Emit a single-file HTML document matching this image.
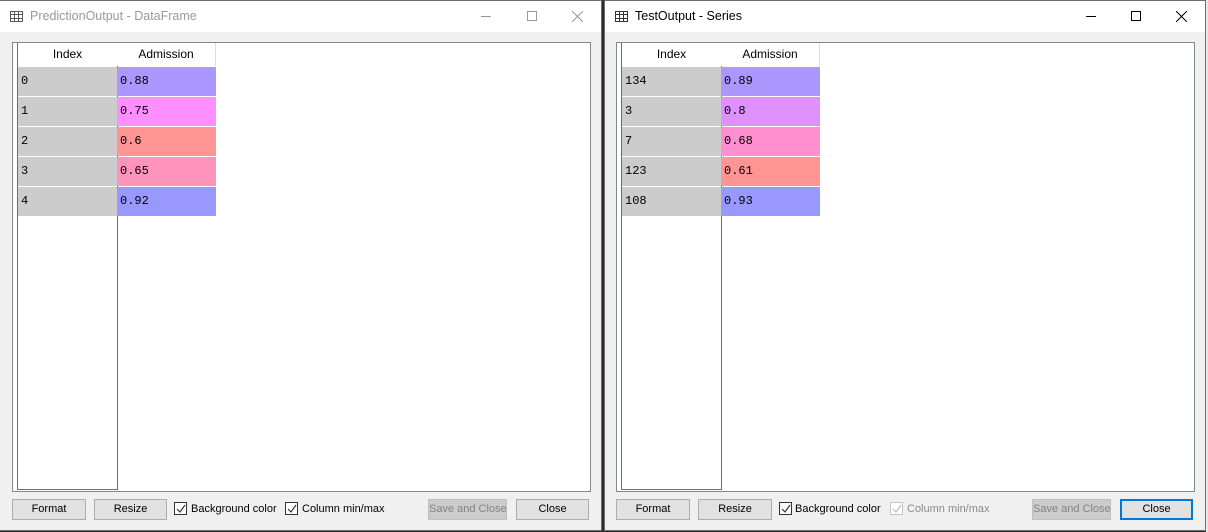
<!DOCTYPE html>
<html><head><meta charset="utf-8"><style>
*{box-sizing:border-box;margin:0;padding:0}
body{width:1208px;height:532px;position:relative;overflow:hidden;background:#2b2b2b;font-family:"Liberation Sans",sans-serif;font-size:12px;color:#000}
.win{position:absolute;top:0;height:531px;background:#f0f0f0;border:1px solid #6d6d6d}
.tb{position:absolute;left:0;top:0;right:0;height:31px;background:#fff}
.title{position:absolute;left:30px;top:8px;font-size:12.5px}
.ico{position:absolute;left:10px;top:10px;width:13px;height:11px;border:1.5px solid #333}
.ico:before{content:"";position:absolute;left:0;right:0;top:2px;height:3px;border-top:1px solid #333;border-bottom:1px solid #333}
.ico:after{content:"";position:absolute;top:0;bottom:0;left:3px;width:3px;border-left:1px solid #333;border-right:1px solid #333}
.frame{position:absolute;left:11px;top:41px;width:579px;height:450px;background:#fff;border:1px solid #828790}
.idx{position:absolute;left:4px;top:0;width:101px;height:447px;border:1px solid #6d6d6d;border-top:none;background:#fff}
.hdr{position:absolute;top:0;height:23px;text-align:center;line-height:23px;font-size:12px;background:#fff}
.cell{position:absolute;height:29px;line-height:29px;font-family:"Liberation Mono","DejaVu Sans Mono",monospace;font-size:12px;padding-left:3px}
.btn{position:absolute;top:498px;height:21px;background:#e1e1e1;border:1px solid #adadad;text-align:center;line-height:19px;font-size:11px;white-space:nowrap;overflow:hidden}
.dis{color:#838383;background:#cccccc;border-color:#bfbfbf}
.cb{position:absolute;top:501px;width:13px;height:13px;border:1px solid #333;background:#fff}
.cb svg{position:absolute;left:1px;top:1px}
.lab{position:absolute;top:501px;font-size:11px;line-height:14px;white-space:nowrap}
</style></head><body>

<!-- Window 1 -->
<div class="win" style="left:0;width:602px;border-left:none">
 <div class="tb"><div class="ico" style="opacity:.8"></div><div class="title" style="color:#999">PredictionOutput - DataFrame</div>
  <div style="position:absolute;left:481px;top:15px;width:10px;border-top:1px solid #999"></div>
  <div style="position:absolute;left:527px;top:10px;width:10px;height:10px;border:1px solid #999"></div>
  <svg style="position:absolute;left:572px;top:10px" width="11" height="11"><path d="M0 0L11 11M11 0L0 11" stroke="#999" stroke-width="1"/></svg>
 </div>
 <div class="frame" style="left:12px">
  <div class="idx"></div>
  <div class="hdr" style="left:5px;width:99px">Index</div>
  <div class="hdr" style="left:104px;width:99px;border-right:1px solid #ddd">Admission</div>
  <div class="cell" style="left:5px;top:24px;width:99px;background:#ccc">0</div>
  <div class="cell" style="left:5px;top:54px;width:99px;background:#ccc">1</div>
  <div class="cell" style="left:5px;top:84px;width:99px;background:#ccc">2</div>
  <div class="cell" style="left:5px;top:114px;width:99px;background:#ccc">3</div>
  <div class="cell" style="left:5px;top:144px;width:99px;background:#ccc">4</div>
  <div class="cell" style="left:104px;top:24px;width:99px;background:#aa98ff">0.88</div>
  <div class="cell" style="left:104px;top:54px;width:99px;background:#ff8fff">0.75</div>
  <div class="cell" style="left:104px;top:84px;width:99px;background:#ff9494">0.6</div>
  <div class="cell" style="left:104px;top:114px;width:99px;background:#ff94bb">0.65</div>
  <div class="cell" style="left:104px;top:144px;width:99px;background:#9898ff">0.92</div>
 </div>
 <div class="btn" style="left:12px;width:74px">Format</div>
 <div class="btn" style="left:94px;width:73px">Resize</div>
 <div class="cb" style="left:174px"><svg width="10" height="10"><path d="M1 5L4 8L9 1" stroke="#333" fill="none" stroke-width="1.2"/></svg></div>
 <div class="lab" style="left:191px">Background color</div>
 <div class="cb" style="left:285px"><svg width="10" height="10"><path d="M1 5L4 8L9 1" stroke="#333" fill="none" stroke-width="1.2"/></svg></div>
 <div class="lab" style="left:302px">Column min/max</div>
 <div class="btn dis" style="left:428px;width:79px">Save and Close</div>
 <div class="btn" style="left:516px;width:73px">Close</div>
</div>

<!-- Window 2 -->
<div class="win" style="left:604px;width:602px">
 <div class="tb"><div class="ico"></div><div class="title">TestOutput - Series</div>
  <div style="position:absolute;left:481px;top:15px;width:10px;border-top:1px solid #000"></div>
  <div style="position:absolute;left:526px;top:10px;width:10px;height:10px;border:1px solid #000"></div>
  <svg style="position:absolute;left:571px;top:10px" width="11" height="11"><path d="M0 0L11 11M11 0L0 11" stroke="#000" stroke-width="1"/></svg>
 </div>
 <div class="frame">
  <div class="idx"></div>
  <div class="hdr" style="left:5px;width:99px">Index</div>
  <div class="hdr" style="left:104px;width:99px;border-right:1px solid #ddd">Admission</div>
  <div class="cell" style="left:5px;top:24px;width:99px;background:#ccc">134</div>
  <div class="cell" style="left:5px;top:54px;width:99px;background:#ccc">3</div>
  <div class="cell" style="left:5px;top:84px;width:99px;background:#ccc">7</div>
  <div class="cell" style="left:5px;top:114px;width:99px;background:#ccc">123</div>
  <div class="cell" style="left:5px;top:144px;width:99px;background:#ccc">108</div>
  <div class="cell" style="left:104px;top:24px;width:99px;background:#aa98ff">0.89</div>
  <div class="cell" style="left:104px;top:54px;width:99px;background:#e08fff">0.8</div>
  <div class="cell" style="left:104px;top:84px;width:99px;background:#ff8fcf">0.68</div>
  <div class="cell" style="left:104px;top:114px;width:99px;background:#ff9494">0.61</div>
  <div class="cell" style="left:104px;top:144px;width:99px;background:#9898ff">0.93</div>
 </div>
 <div class="btn" style="left:11px;width:74px">Format</div>
 <div class="btn" style="left:93px;width:74px">Resize</div>
 <div class="cb" style="left:174px"><svg width="10" height="10"><path d="M1 5L4 8L9 1" stroke="#333" fill="none" stroke-width="1.2"/></svg></div>
 <div class="lab" style="left:190px">Background color</div>
 <div class="cb" style="left:285px;border-color:#c5c5c5"><svg width="10" height="10"><path d="M1 5L4 8L9 1" stroke="#bbb" fill="none" stroke-width="1.2"/></svg></div>
 <div class="lab" style="left:302px;color:#8a8a8a">Column min/max</div>
 <div class="btn dis" style="left:427px;width:79px">Save and Close</div>
 <div class="btn" style="left:515px;width:73px;border:2px solid #0078d7;line-height:17px">Close</div>
</div>
<div style="position:absolute;left:1206px;top:0;width:2px;height:532px;background:#e8e8e8"></div>
</body></html>
